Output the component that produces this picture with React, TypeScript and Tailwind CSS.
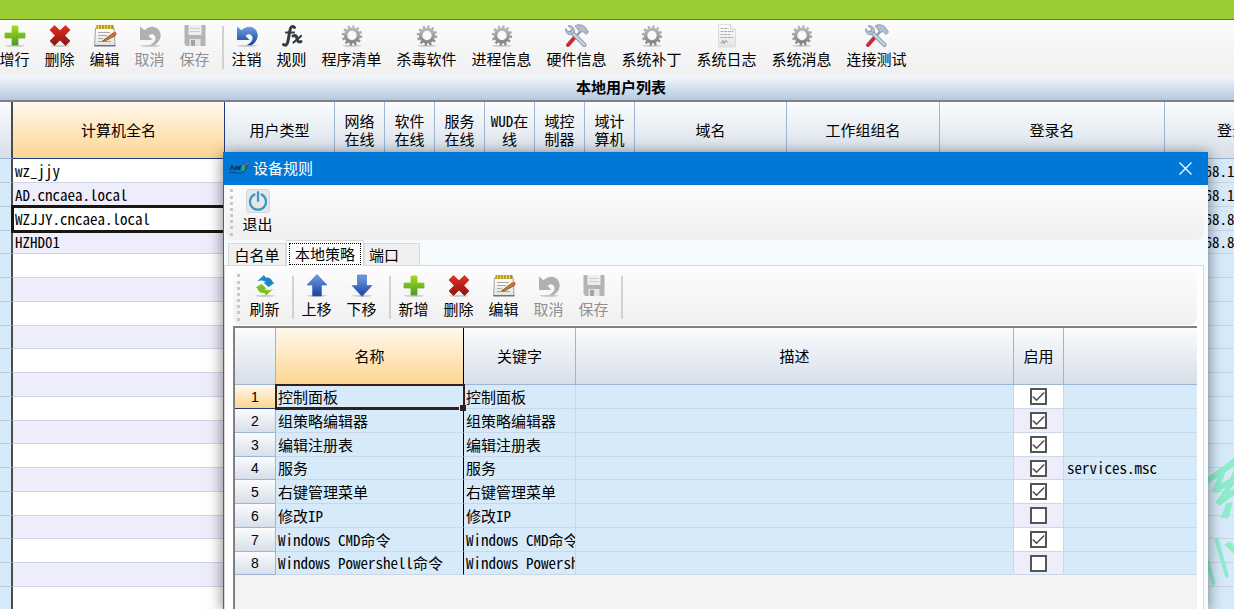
import { useState, type ReactNode } from "react";
import clsx from "clsx";

const GRID_FONT = "font-['Noto_Sans_Mono_CJK_SC','Liberation_Mono','Noto_Sans_CJK_SC',monospace]";
const UI_FONT = "font-['Noto_Sans_CJK_SC',sans-serif]";

/* ---------- icons ---------- */

function Icon({ children }: { children: ReactNode }) {
  return (
    <svg viewBox="0 0 24 24" className="h-6 w-6" aria-hidden="true">
      {children}
    </svg>
  );
}

function IconDefs() {
  return (
    <svg className="absolute h-0 w-0" aria-hidden="true">
      <defs>
        <linearGradient id="green" x1="0" y1="0" x2="0" y2="1">
          <stop offset="0" stopColor="#a2dc1e" />
          <stop offset="1" stopColor="#4c9c22" />
        </linearGradient>
        <linearGradient id="red" x1="0" y1="0" x2="0" y2="1">
          <stop offset="0" stopColor="#e0301e" />
          <stop offset="1" stopColor="#8c1414" />
        </linearGradient>
        <linearGradient id="blue" x1="0" y1="0" x2="0" y2="1">
          <stop offset="0" stopColor="#6fa0e6" />
          <stop offset="1" stopColor="#1c3f9c" />
        </linearGradient>
        <linearGradient id="gray" x1="0" y1="0" x2="0" y2="1">
          <stop offset="0" stopColor="#b8b8b8" />
          <stop offset="1" stopColor="#868686" />
        </linearGradient>
        <linearGradient id="paper" x1="0" y1="0" x2="0" y2="1">
          <stop offset="0" stopColor="#ffffff" />
          <stop offset="1" stopColor="#e2e2e2" />
        </linearGradient>
      </defs>
    </svg>
  );
}

const Shadow = () => <ellipse cx="12" cy="21.8" rx="10" ry="0.9" fill="#9a9a9a" opacity="0.55" />;

const undoPath = "M2 2.500l4.500 3.800C10.500 2 17 1.500 20.500 5.500c4 5 2.500 11.500-4 15.700h-5c5.500-2.700 7.500-6.500 5-9.600-1.800-2.100-4.200-1.600-6 .2L14.500 16H2z";

const icons = {
  plus: (
    <Icon>
      <Shadow />
      <path d="M9 2h6v7h7v5h-7v7H9v-7H2V9h7z" fill="url(#green)" stroke="url(#green)" strokeWidth=".8" strokeLinejoin="round" />
    </Icon>
  ),
  cross: (
    <Icon>
      <Shadow />
      <path
        d="M6.500 2l5.500 5.300L17.500 2 21.500 6l-5.300 5.500 5.300 5.500-4 4-5.500-5.500L6.500 21l-4-4 5.300-5.500L2.500 6z"
        fill="url(#red)"
        stroke="url(#red)"
        strokeWidth="1.200"
        strokeLinejoin="round"
      />
    </Icon>
  ),
  edit: (
    <Icon>
      <path d="M2.500 4h18.500l1 17.500H1.600z" fill="url(#paper)" stroke="#a2a2a2" />
      <path d="M1.500 21.800h21" stroke="#6a6a6a" strokeWidth="1.300" />
      <path d="M3.500 1h17v4h-17z" fill="#a88c1c" />
      <path d="M5.500 1v4M8.500 1v4M11.500 1v4M14.500 1v4M17.500 1v4" stroke="#f0d84a" strokeWidth="1.500" />
      <path d="M5 8.500h12M5 11.500h9M5 14.500h5M5 17.500h13" stroke="#a8a8a8" />
      <path d="M9.500 17L20 9l2.400 2.600L12 17z" fill="#c9842a" stroke="#7a4a14" strokeWidth=".8" />
      <path d="M20 8.500l2.500-1 1.300 2.500-1.500 1.500z" fill="#d9604a" />
    </Icon>
  ),
  undoGray: (
    <Icon>
      <Shadow />
      <path d={undoPath} fill="#b0b0b0" />
    </Icon>
  ),
  undoBlue: (
    <Icon>
      <Shadow />
      <path d={undoPath} fill="url(#blue)" />
    </Icon>
  ),
  save: (
    <Icon>
      <path d="M1.500 1h21v21h-19l-2-2z" fill="#b4b4b4" />
      <path d="M5.500 1h13v10h-13z" fill="#eeeeee" />
      <path d="M7 4.500h10M7 7.500h10" stroke="#cfcfcf" />
      <path d="M6.500 15h11v7h-11z" fill="#e4e4e4" />
      <path d="M8 16h4v6H8z" fill="#a4a4a4" />
    </Icon>
  ),
  fx: (
    <Icon>
      <g fill="none" stroke="#323a46" strokeLinecap="round">
        <path d="M14.500 3.500c-2-2-4-.8-4.500 2.500L8 17c-.7 4-2.300 5-4.500 3.500" strokeWidth="3" />
        <path d="M6 8.500h8" strokeWidth="2.200" />
        <path d="M13 12c2.500-1.500 3.500 0 4 2.500s1.500 4.500 4 3" strokeWidth="3" />
        <path d="M21 12l-7.500 6.500" strokeWidth="2.200" />
      </g>
    </Icon>
  ),
  gear: (
    <Icon>
      <Shadow />
      <circle cx="12" cy="11.500" r="8.800" fill="none" stroke="url(#gray)" strokeWidth="2.800" strokeDasharray="2.300 2.307" />
      <circle cx="12" cy="11.500" r="6.400" fill="none" stroke="url(#gray)" strokeWidth="3.400" />
    </Icon>
  ),
  tools: (
    <Icon>
      <path d="M3 21l7.500-8.500" stroke="#c42e34" strokeWidth="4" strokeLinecap="round" />
      <path d="M10.500 13l6.500-7.500" stroke="#8d9ab0" strokeWidth="2.500" />
      <path d="M10 2c4-2.500 8-1 10 1l3.500 5-2.500 2.500-3-3-3 1-2.500-3.500z" fill="#b2bdce" stroke="#8290a6" strokeWidth=".8" />
      <path d="M6.500 8l13 13" stroke="#8290a6" strokeWidth="4" strokeLinecap="round" />
      <path d="M6.500 8l13 13" stroke="#cdd5e1" strokeWidth="2.400" strokeLinecap="round" />
      <path d="M3 1.800l3.500 3-.5 2.500-3 .3L.8 4.500c-.8 4 1.700 6.700 5.700 6L9.500 8C9.800 4 7 1 3 1.800z" fill="#b2bdce" stroke="#8290a6" strokeWidth=".8" />
    </Icon>
  ),
  log: (
    <Icon>
      <path d="M3.500 .5h12l5 5V23h-17z" fill="url(#paper)" stroke="#dcdcdc" />
      <path d="M15.500 .5v5h5" fill="#f4f4f4" stroke="#d0d0d0" />
      <path d="M5.500 4.500h8M5.500 7.500h13M5.500 10.500h10M5.500 13.500h13" stroke="#acacac" strokeDasharray="3 .7" />
      <path d="M6 19.500l2-3 1 3 2-3 1.500 2" stroke="#8c8c8c" fill="none" />
    </Icon>
  ),
  refresh: (
    <Icon>
      <Shadow />
      <path d="M4 7.500L11 1l1.500 2.500C16 3 19 5 20 8.500l1.500.5-6 4-5-4.500 2.500-.5C10 6 7 6 4 7.500z" fill="#1c86c8" />
      <path d="M20 15l-7 6.500-1.500-2.500C8 19.500 5 17.500 4 14l-1.500-.5 6-3.500 5 4.500-2.500.5c3 1.500 6 1.500 9 0z" fill="#7ac21e" />
    </Icon>
  ),
  up: (
    <Icon>
      <Shadow />
      <path d="M12 .5L22 11h-5.500v11h-9V11H2z" fill="url(#blue)" stroke="#3c68bc" strokeWidth=".6" />
    </Icon>
  ),
  down: (
    <Icon>
      <Shadow />
      <path d="M7.500 1h9v10.500H22L12 22.500 2 11.500h5.500z" fill="url(#blue)" stroke="#3c68bc" strokeWidth=".6" />
    </Icon>
  ),
  power: (
    <Icon>
      <rect x=".5" y=".5" width="23" height="23" rx="2.500" fill="#e6e7e9" stroke="#d3d5d8" />
      <path d="M8.500 5.500a8 8 0 1 0 7 0" fill="none" stroke="#3a98c4" strokeWidth="2.200" strokeLinecap="round" />
      <path d="M12 3v9" stroke="#3a98c4" strokeWidth="2.200" strokeLinecap="round" />
    </Icon>
  ),
};

type IconName = keyof typeof icons;
type Tool = { label: string; icon: IconName; off?: boolean } | "sep";

const mainTools: Tool[] = [
  { label: "增行", icon: "plus" },
  { label: "删除", icon: "cross" },
  { label: "编辑", icon: "edit" },
  { label: "取消", icon: "undoGray", off: true },
  { label: "保存", icon: "save", off: true },
  "sep",
  { label: "注销", icon: "undoBlue" },
  { label: "规则", icon: "fx" },
  { label: "程序清单", icon: "gear" },
  { label: "杀毒软件", icon: "gear" },
  { label: "进程信息", icon: "gear" },
  { label: "硬件信息", icon: "tools" },
  { label: "系统补丁", icon: "gear" },
  { label: "系统日志", icon: "log" },
  { label: "系统消息", icon: "gear" },
  { label: "连接测试", icon: "tools" },
];

const ruleTools: Tool[] = [
  { label: "刷新", icon: "refresh" },
  "sep",
  { label: "上移", icon: "up" },
  { label: "下移", icon: "down" },
  "sep",
  { label: "新增", icon: "plus" },
  { label: "删除", icon: "cross" },
  { label: "编辑", icon: "edit" },
  { label: "取消", icon: "undoGray", off: true },
  { label: "保存", icon: "save", off: true },
  "sep",
];

function ToolBar({ tools, grip, className }: { tools: Tool[]; grip?: boolean; className?: string }) {
  return (
    <div
      role="toolbar"
      className={clsx("flex h-[55px] shrink-0 bg-linear-to-b from-[#fcfcfc] to-[#f0f0f0]", className)}
    >
      {grip && <span className="my-1 mr-0.5 ml-1 w-0 self-stretch border-l-3 border-dotted border-[#c8c8c8]" />}
      {tools.map((t, i) =>
        t === "sep" ? (
          <span key={i} className="my-1.5 w-[7px] shrink-0 border-r-2 border-[#d2d2d2]" />
        ) : (
          <button
            key={i}
            type="button"
            disabled={t.off}
            className={clsx(
              "flex shrink-0 flex-col items-center pt-1 text-[15px] leading-[22px] whitespace-nowrap",
              t.label.length > 2 ? "w-[75px]" : "w-[45px]",
              t.off ? "text-[#8f8f8f]" : "text-black",
            )}
          >
            {icons[t.icon]}
            {t.label}
          </button>
        ),
      )}
    </div>
  );
}

/* ---------- user grid ---------- */

const headGray = "bg-linear-to-b from-[#fafcfd] to-[#d8dfe9]";
const headGold = "bg-linear-to-b from-[#fff8ec] to-[#fdd590]";

const userColumns: { label: ReactNode; width: string }[] = [
  { label: "用户类型", width: "w-[110px]" },
  { label: <>网络<br />在线</>, width: "w-[50px]" },
  { label: <>软件<br />在线</>, width: "w-[50px]" },
  { label: <>服务<br />在线</>, width: "w-[50px]" },
  { label: <>WUD在<br />线</>, width: "w-[50px]" },
  { label: <>域控<br />制器</>, width: "w-[50px]" },
  { label: <>域计<br />算机</>, width: "w-[50px]" },
  { label: "域名", width: "w-[152px]" },
  { label: "工作组组名", width: "w-[153px]" },
  { label: "登录名", width: "w-[225px]" },
  { label: "登录IP", width: "w-[150px]" },
];

const users = [
  { name: "wz_jjy", ip: "192.168.1" },
  { name: "AD.cncaea.local", ip: "192.168.1" },
  { name: "WZJJY.cncaea.local", ip: "192.168.8" },
  { name: "HZHD01", ip: "192.168.8" },
];

function UserGrid() {
  const rows = Array.from({ length: 20 }, (_, i) => users[i]);
  return (
    <div className="min-h-0 flex-1 overflow-hidden border-t-2 border-[#808080]">
      <table
        className={clsx("w-[1315px] table-fixed border-separate border-spacing-0 text-[15px] leading-[18px] text-black", GRID_FONT)}
      >
        <thead>
          <tr className="h-[57px]">
            <th className={clsx("w-[13px] border-r-2 border-b border-r-[#4c4c4c] border-b-[#9bb5d3]", headGray)} />
            <th className={clsx("w-[212px] border-r border-b border-[#1d3a8a] p-0 font-normal", headGold)}>计算机全名</th>
            {userColumns.map((c, i) => (
              <th key={i} className={clsx("border-r border-b border-[#9bb5d3] p-0 font-normal", headGray, c.width)}>
                {c.label}
              </th>
            ))}
          </tr>
        </thead>
        <tbody>
          {rows.map((u, i) => (
            <tr key={i} className="h-6 nth-[4n]:h-[23px]">
              <td className="border-r-2 border-b border-r-[#4c4c4c] border-b-[#b9cbe0] bg-[#d7eaf9] p-0" />
              <td
                className={clsx(
                  "border-b border-[#cfd3e4] px-0.5 py-0",
                  i % 2 ? "bg-[#eeedfc]" : "bg-white",
                  i === 2 && "outline-3 -outline-offset-1 outline-[#1a1612]",
                )}
              >
                {u?.name}
              </td>
              {userColumns.map((_, c) => (
                <td key={c} className="border-b border-[#cbd3e2] bg-[#d7eaf9] px-0.5 py-0">
                  {c === userColumns.length - 1 && u?.ip}
                </td>
              ))}
            </tr>
          ))}
        </tbody>
      </table>
    </div>
  );
}

/* ---------- rules dialog ---------- */

const initialRules = [
  { name: "控制面板", on: true },
  { name: "组策略编辑器", on: true },
  { name: "编辑注册表", on: true },
  { name: "服务", on: true, extra: "services.msc" },
  { name: "右键管理菜单", on: true },
  { name: "修改IP", on: false },
  { name: "Windows CMD命令", on: true },
  { name: "Windows Powershell命令", on: false },
];

function RuleGrid() {
  const [rules, setRules] = useState(initialRules);
  const toggle = (i: number) => setRules(rules.map((r, n) => (n === i ? { ...r, on: !r.on } : r)));
  const th = "border-r border-b border-[#9bb5d3] p-0 font-normal";
  const td = "border-r border-b border-[#cbd6e6] bg-[#d7eaf9] px-0.5 py-0 whitespace-nowrap";
  return (
    <div className="min-h-0 flex-1 overflow-hidden border-t-2 border-l-2 border-[#808080] bg-[#f3f3f3]">
      <table
        className={clsx("w-full table-fixed border-separate border-spacing-0 text-[15px] leading-[18px] text-black", GRID_FONT)}
      >
        <thead>
          <tr className="h-[57px]">
            <th className={clsx(th, headGray, "w-[41px]")} />
            <th className={clsx("w-[188px] border-r border-b border-r-black border-b-[#1d3a8a] p-0 font-normal", headGold)}>
              名称
            </th>
            <th className={clsx(th, headGray, "w-[112px]")}>关键字</th>
            <th className={clsx(th, headGray)}>描述</th>
            <th className={clsx(th, headGray, "w-[50px]")}>启用</th>
            <th className={clsx("w-[133px] border-b border-[#9bb5d3] p-0", headGray)} />
          </tr>
        </thead>
        <tbody>
          {rules.map((r, i) => (
            <tr key={r.name} className="h-6 nth-[4n]:h-[23px]">
              <th
                className={clsx(
                  "border-r border-b p-0 font-['Liberation_Sans',sans-serif] text-[14px] font-normal",
                  i === 0 ? "border-[#1d3a8a]" : "border-[#9bb5d3]",
                  i === 0 ? headGold : headGray,
                )}
              >
                {i + 1}
              </th>
              <td
                className={clsx(
                  "border-r border-b border-r-black border-b-[#cbd6e6] bg-[#d7eaf9] px-0.5 py-0 whitespace-nowrap",
                  i === 0 && "relative z-10 outline-2 -outline-offset-1 outline-[#33201a]",
                )}
              >
                {r.name}
                {i === 0 && (
                  <>
                    <span className="absolute right-0 -bottom-0.5 left-0 h-[3px] bg-[#33201a]" />
                    <span className="absolute -right-[3px] -bottom-[3px] h-[6px] w-[7px] border-l border-[#d7eaf9] bg-[#33201a]" />
                  </>
                )}
              </td>
              <td className={clsx(td, "overflow-hidden")}>{r.name}</td>
              <td className={td} />
              <td className={clsx("border-r border-b border-[#cbd6e6] p-0", i % 2 ? "bg-[#eeedfc]" : "bg-white")}>
                <label className="mx-auto grid h-[17px] w-[17px]">
                  <input
                    type="checkbox"
                    aria-label={r.name}
                    checked={r.on}
                    onChange={() => toggle(i)}
                    className="peer col-start-1 row-start-1 h-[17px] w-[17px] appearance-none border-2 border-[#555] bg-white"
                  />
                  <svg
                    viewBox="0 0 17 17"
                    className="pointer-events-none invisible col-start-1 row-start-1 h-[17px] w-[17px] peer-checked:visible"
                    aria-hidden="true"
                  >
                    <path d="M2.800 8.500l3.700 3.700 7.700-7.700" fill="none" stroke="#4a4a4a" strokeWidth="1.500" />
                  </svg>
                </label>
              </td>
              <td className="border-b border-[#cbd6e6] bg-[#d7eaf9] px-[3px] py-0 whitespace-nowrap">{r.extra}</td>
            </tr>
          ))}
        </tbody>
      </table>
    </div>
  );
}

function RulesDialog() {
  return (
    <section
      role="dialog"
      aria-label="设备规则"
      className="absolute top-[152px] right-[26px] bottom-0 left-[223px] flex flex-col border-l border-[#0078d7] bg-[#f5fafc] shadow-[0_2px_14px_rgba(0,0,0,0.5)]"
    >
      <header className="flex h-[33px] shrink-0 items-center bg-[#0078d7] pr-4 pl-[5px] text-[15px] text-white">
        <svg viewBox="0 0 20 14" className="mr-1 h-3.5 w-5" aria-hidden="true">
          <path d="M1 8l2-4 2 4M6.500 8V4M9 8V4M6.500 6H9M10.500 8V4M10.500 4.500h2" fill="none" stroke="#1c2e44" strokeWidth="1.300" />
          <path d="M16 4h-2.500v4H16M13.500 6H16" fill="none" stroke="#35b56a" strokeWidth="1.300" />
          <path d="M.5 11c5-2.500 8 2 12 0 3.500-1.500 5-4 5.500-8" fill="none" stroke="#123a66" />
          <circle cx="18.200" cy="1.800" r="1.300" fill="#e8384a" />
        </svg>
        <h2 className="flex-1">设备规则</h2>
        <button type="button" aria-label="关闭">
          <svg viewBox="0 0 13 13" className="h-[13px] w-[13px]" aria-hidden="true">
            <path d="M.5.5l12 12M12.500.5l-12 12" stroke="#fff" strokeWidth="1.200" />
          </svg>
        </button>
      </header>
      <ToolBar tools={[{ label: "退出", icon: "power" }]} grip className="mr-1 ml-0.5 rounded-lg" />
      <div role="tablist" className="flex h-[25px] shrink-0 items-end pl-1 text-[15px] leading-[22px] text-black">
        <button role="tab" type="button" className="h-[22px] w-[58px] border border-b-0 border-[#d9d9d9] bg-[#f0f0f0]">
          白名单
        </button>
        <button
          role="tab"
          type="button"
          aria-selected="true"
          className="z-10 -mb-px h-[26px] w-[78px] border border-b-0 border-[#d9d9d9] bg-white p-0.5"
        >
          <span className="block border border-dotted border-black leading-5">本地策略</span>
        </button>
        <button
          role="tab"
          type="button"
          className="h-[22px] w-14 border border-b-0 border-[#d9d9d9] bg-[#f0f0f0] pl-1 text-left"
        >
          端口
        </button>
      </div>
      <div className="mr-1 flex min-h-0 flex-1 flex-col border-x border-t border-[#d9d9d9] bg-white pt-1 pr-1.5 pl-2">
        <ToolBar tools={ruleTools} grip className="mb-px rounded-lg" />
        <RuleGrid />
      </div>
    </section>
  );
}

export default function App() {
  return (
    <div className={clsx("relative flex h-screen flex-col overflow-hidden bg-white", UI_FONT)}>
      <IconDefs />
      <div className="h-5 shrink-0 border-b border-[#1c7fd0] bg-[#9acd32]" />
      <div className="flex shrink-0 overflow-hidden bg-[#f0f0f0]">
        <ToolBar tools={mainTools} className="-ml-2 flex-1" />
      </div>
      <h1 className="h-[25px] shrink-0 bg-linear-to-b from-[#f6fafd] to-[#b5c8e2] pl-2 text-center text-[15px] leading-[24px] font-bold text-black">
        本地用户列表
      </h1>
      <UserGrid />
      <span className="absolute right-[-26px] bottom-[95px] -rotate-30 text-[56px] leading-none font-bold text-[#8eecca]" aria-hidden="true">
        系
      </span>
      <span className="absolute right-[-26px] bottom-10 -rotate-30 text-[40px] leading-none font-bold text-[#8eecca]" aria-hidden="true">
        //w
      </span>
      <RulesDialog />
    </div>
  );
}
